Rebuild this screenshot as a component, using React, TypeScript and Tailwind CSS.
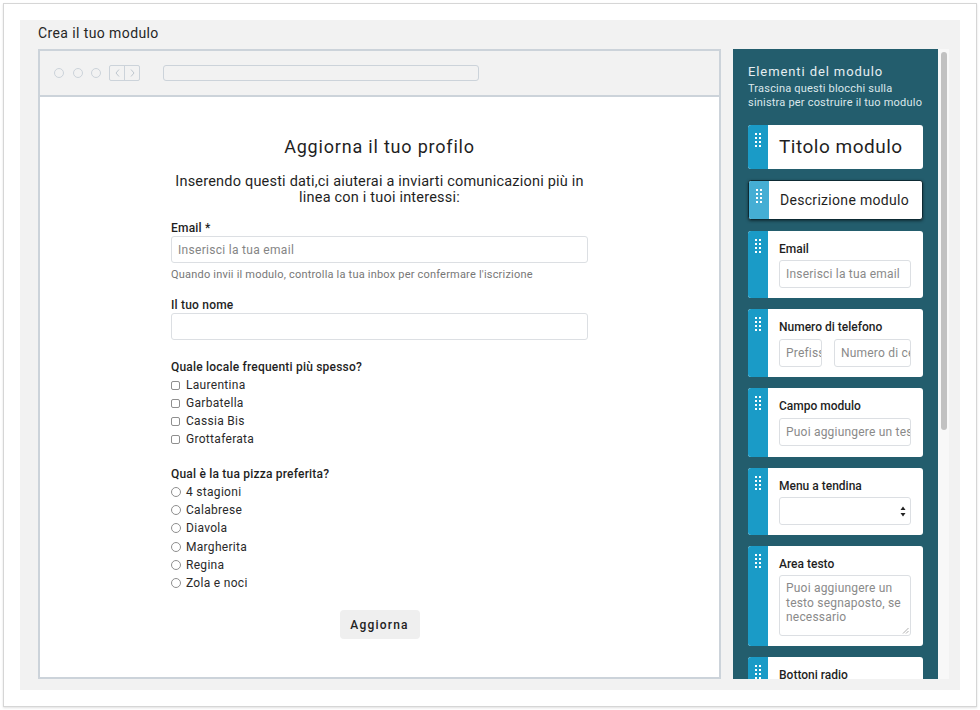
import React from "react";

const font = { fontFamily: "Roboto, 'Noto Sans', sans-serif" };

function Handle() {
  return (
    <svg width="6" height="14" viewBox="0 0 6 14" className="mt-[8px]">
      {[0, 1, 2, 3].map((r) =>
        [0, 1].map((c) => (
          <rect key={`${r}-${c}`} x={c * 4} y={r * 4} width="2" height="2" fill="#ffffff" />
        ))
      )}
    </svg>
  );
}

function Card({
  children,
  strip = "bg-[#1a9bc7]",
  selected = false,
  className = "",
}: {
  children: React.ReactNode;
  strip?: string;
  selected?: boolean;
  className?: string;
}) {
  return (
    <div
      className={`flex shrink-0 rounded-[3px] overflow-hidden bg-white ${
        selected ? "border border-[#0d2a33] shadow-[0_1px_3px_rgba(0,0,0,0.5)]" : ""
      } ${className}`}
    >
      <div className={`w-[20px] shrink-0 flex justify-center ${strip}`}>
        <Handle />
      </div>
      <div className="flex-1 pl-[11px] pr-[12px] min-w-0">{children}</div>
    </div>
  );
}

function SideInput({ text, className = "" }: { text: string; className?: string }) {
  return (
    <div
      className={`h-[28px] border border-[#dcdfe3] rounded-[3px] flex items-center pl-[6px] text-[12px] text-[#8a8a8a] overflow-hidden whitespace-nowrap tracking-[0.2px] ${className}`}
    >
      {text}
    </div>
  );
}

function Checkbox({ label }: { label: string }) {
  return (
    <div className="h-[18px] flex items-center">
      <span className="w-[9px] h-[9px] border border-[#8f8f8f] rounded-[2px] bg-white shrink-0" />
      <span className="ml-[6px] text-[12px] text-[#2a2a2a] tracking-[0.3px]">{label}</span>
    </div>
  );
}

function Radio({ label }: { label: string }) {
  return (
    <div className="h-[18.2px] flex items-center">
      <span className="w-[10px] h-[10px] border border-[#8f8f8f] rounded-full bg-white shrink-0" />
      <span className="ml-[5px] text-[12px] text-[#2a2a2a] tracking-[0.3px]">{label}</span>
    </div>
  );
}

export default function App() {
  return (
    <div className="w-[980px] h-[710px] bg-white p-[3px]" style={font}>
      <div className="w-[974px] h-[704px] border border-[#d6d6d6] shadow-[0_1px_2px_rgba(0,0,0,0.12)] pt-[16px] pl-[16px] pr-[15px] pb-[15px]">
        <div className="w-[940px] h-[670px] bg-[#f2f2f2] pl-[18px] pr-[11px] pb-[11px] flex flex-col">
          <div className="pt-[5px] h-[29px] text-[14px] leading-[16px] text-[#262626] tracking-[0.4px]">
            Crea il tuo modulo
          </div>
          <div className="flex gap-[12px] h-[630px]">
            {/* Browser mock */}
            <div className="w-[683px] h-[630px] border-2 border-[#ccd3da] flex flex-col bg-white">
              <div className="h-[46px] bg-[#f2f2f2] border-b-2 border-[#ccd3da] flex items-center pl-[14px] shrink-0">
                <div className="flex gap-[8.5px]">
                  <span className="w-[10px] h-[10px] rounded-full border-[1.5px] border-[#ccd3da]" />
                  <span className="w-[10px] h-[10px] rounded-full border-[1.5px] border-[#ccd3da]" />
                  <span className="w-[10px] h-[10px] rounded-full border-[1.5px] border-[#ccd3da]" />
                </div>
                <div className="ml-[8px] w-[31px] h-[16px] border-[1.5px] border-[#ccd3da] rounded-[2px] flex">
                  <div className="flex-1 border-r-[1.5px] border-[#ccd3da] flex items-center justify-center">
                    <svg width="5" height="8" viewBox="0 0 5 8">
                      <path d="M4 0.5 L1 4 L4 7.5" fill="none" stroke="#bfc7cf" strokeWidth="1" />
                    </svg>
                  </div>
                  <div className="flex-1 flex items-center justify-center">
                    <svg width="5" height="8" viewBox="0 0 5 8">
                      <path d="M1 0.5 L4 4 L1 7.5" fill="none" stroke="#bfc7cf" strokeWidth="1" />
                    </svg>
                  </div>
                </div>
                <div className="ml-[23px] w-[316px] h-[16px] border-[1.5px] border-[#ccd3da] rounded-[3px]" />
              </div>
              <div className="flex-1 flex justify-center">
                <div className="w-[417px] pt-[39px] flex flex-col">
                  <div className="text-[18px] leading-[22px] text-center text-[#1f1f1f] tracking-[0.8px]">
                    Aggiorna il tuo profilo
                  </div>
                  <div className="mt-[16px] -mx-[10px] text-[14.5px] leading-[16px] text-center text-[#1f1f1f] tracking-[0.2px] whitespace-nowrap">
                    Inserendo questi dati,ci aiuterai a inviarti comunicazioni più in
                    <br />
                    linea con i tuoi interessi:
                  </div>
                  <div className="mt-[15px] text-[12px] leading-[14px] font-medium text-[#1f1f1f] tracking-[0.2px]">
                    Email *
                  </div>
                  <div className="mt-[1px] h-[27px] border border-[#dcdfe3] rounded-[3px] flex items-center pl-[6px] text-[12px] text-[#858585] tracking-[0.3px]">
                    Inserisci la tua email
                  </div>
                  <div className="mt-[5px] text-[11px] leading-[13px] text-[#777] tracking-[0.2px]">
                    Quando invii il modulo, controlla la tua inbox per confermare l'iscrizione
                  </div>
                  <div className="mt-[17px] text-[12px] leading-[14px] font-medium text-[#1f1f1f] tracking-[0.2px]">
                    Il tuo nome
                  </div>
                  <div className="mt-[1px] h-[27px] border border-[#dcdfe3] rounded-[3px]" />
                  <div className="mt-[20px] text-[12px] leading-[14px] font-medium text-[#1f1f1f] tracking-[0.2px]">
                    Quale locale frequenti più spesso?
                  </div>
                  <div className="mt-[2px] flex flex-col">
                    <Checkbox label="Laurentina" />
                    <Checkbox label="Garbatella" />
                    <Checkbox label="Cassia Bis" />
                    <Checkbox label="Grottaferata" />
                  </div>
                  <div className="mt-[19px] text-[12px] leading-[14px] font-medium text-[#1f1f1f] tracking-[0.2px]">
                    Qual è la tua pizza preferita?
                  </div>
                  <div className="mt-[2px] flex flex-col">
                    <Radio label="4 stagioni" />
                    <Radio label="Calabrese" />
                    <Radio label="Diavola" />
                    <Radio label="Margherita" />
                    <Radio label="Regina" />
                    <Radio label="Zola e noci" />
                  </div>
                  <div className="mt-[18px] flex justify-center">
                    <div className="w-[80px] h-[29px] rounded-[4px] bg-[#efefef] flex items-center justify-center text-[12px] font-medium text-[#222] tracking-[1.2px]">
                      Aggiorna
                    </div>
                  </div>
                </div>
              </div>
            </div>

            {/* Sidebar */}
            <div className="flex h-[630px]">
              <div className="w-[205px] h-[630px] bg-[#235d6d] overflow-hidden pl-[15px] pr-[15px] pt-[15px] flex flex-col">
                <div className="text-[13px] leading-[16px] text-[#e6eef1] tracking-[0.9px]">
                  Elementi del modulo
                </div>
                <div className="mt-[2px] text-[11px] leading-[14px] text-[#dbe7eb] tracking-[0.2px]">
                  Trascina questi blocchi sulla
                  <br />
                  sinistra per costruire il tuo modulo
                </div>
                <div className="mt-[15px] flex flex-col gap-[11px]">
                  <Card className="h-[44px]">
                    <div className="h-full flex items-center text-[19px] text-[#1f1f1f] tracking-[0.5px]">
                      Titolo modulo
                    </div>
                  </Card>
                  <Card className="h-[40px]" strip="bg-[#45aed4]" selected>
                    <div className="h-full flex items-center text-[14px] text-[#1f1f1f] tracking-[0.3px]">
                      Descrizione modulo
                    </div>
                  </Card>
                  <Card className="h-[67px]">
                    <div className="pt-[11px] text-[12px] leading-[14px] font-medium text-[#1f1f1f]">Email</div>
                    <SideInput text="Inserisci la tua email" className="mt-[4px] h-[27px]" />
                  </Card>
                  <Card className="h-[68px]">
                    <div className="pt-[11px] text-[12px] leading-[14px] font-medium text-[#1f1f1f]">
                      Numero di telefono
                    </div>
                    <div className="mt-[5px] flex gap-[12px]">
                      <SideInput text="Prefisso" className="w-[43px]" />
                      <SideInput text="Numero di cellulare" className="flex-1" />
                    </div>
                  </Card>
                  <Card className="h-[69px]">
                    <div className="pt-[11px] text-[12px] leading-[14px] font-medium text-[#1f1f1f]">Campo modulo</div>
                    <SideInput text="Puoi aggiungere un testo" className="mt-[5px] h-[28px]" />
                  </Card>
                  <Card className="h-[67px]">
                    <div className="pt-[11px] text-[12px] leading-[14px] font-medium text-[#1f1f1f]">Menu a tendina</div>
                    <div className="mt-[4px] h-[28px] border border-[#dcdfe3] rounded-[3px] flex items-center justify-end pr-[4px]">
                      <svg width="6" height="11" viewBox="0 0 6 11">
                        <path d="M3 0.5 L5.5 4 L0.5 4 Z" fill="#222" />
                        <path d="M3 10.5 L5.5 7 L0.5 7 Z" fill="#222" />
                      </svg>
                    </div>
                  </Card>
                  <Card className="h-[100px]">
                    <div className="pt-[11px] text-[12px] leading-[14px] font-medium text-[#1f1f1f]">Area testo</div>
                    <div className="mt-[4px] h-[61px] border border-[#dcdfe3] rounded-[3px] pl-[6px] pt-[5px] text-[12px] leading-[14.5px] text-[#8a8a8a] tracking-[0.2px] flex flex-col relative">
                      <span>Puoi aggiungere un</span>
                      <span>testo segnaposto, se</span>
                      <span>necessario</span>
                      <svg width="7" height="7" viewBox="0 0 7 7" className="absolute right-[1px] bottom-[1px]">
                        <path d="M6.5 1 L1 6.5 M6.5 4 L4 6.5" stroke="#999" strokeWidth="0.8" />
                      </svg>
                    </div>
                  </Card>
                  <Card className="h-[68px]">
                    <div className="pt-[11px] text-[12px] leading-[14px] font-medium text-[#1f1f1f]">Bottoni radio</div>
                  </Card>
                </div>
              </div>
              <div className="w-[11px] h-[630px] bg-[#f8f8f8] pl-[3px] pr-[2px] pt-[3px]">
                <div className="w-[6px] h-[378px] rounded-full bg-[#c1c1c1]" />
              </div>
            </div>
          </div>
        </div>
      </div>
    </div>
  );
}
